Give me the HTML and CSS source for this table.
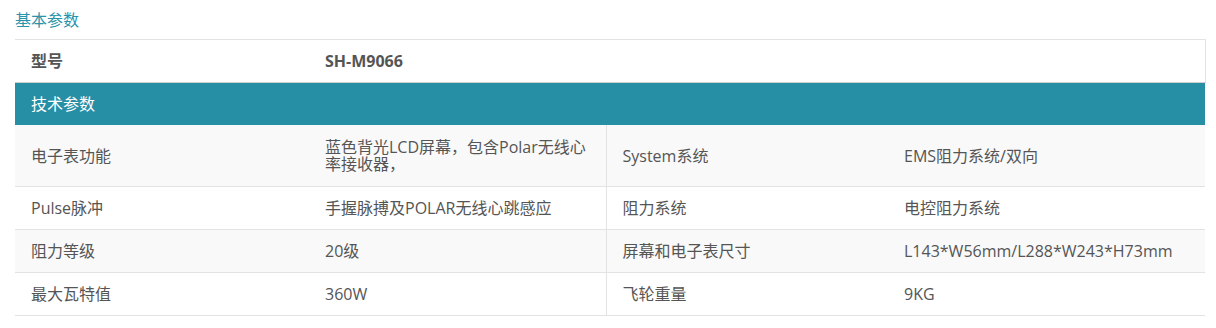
FILE: index.html
```html
<!DOCTYPE html>
<html lang="zh-CN">
<head>
<meta charset="utf-8">
<title>基本参数</title>
<link rel="stylesheet" href="styles.css">
</head>
<body>
<div class="page">
  <div class="section-title">基本参数</div>
  <table class="spec">
    <colgroup>
      <col class="c1"><col class="c2"><col class="c3"><col class="c4">
    </colgroup>
    <tr class="model">
      <th>型号</th>
      <td colspan="3">SH-M9066</td>
    </tr>
    <tr class="group">
      <th colspan="4">技术参数</th>
    </tr>
    <tr class="odd tall">
      <td>电子表功能</td>
      <td>蓝色背光LCD屏幕，包含Polar无线心率接收器，</td>
      <td class="sep">System系统</td>
      <td>EMS阻力系统/双向</td>
    </tr>
    <tr>
      <td>Pulse脉冲</td>
      <td>手握脉搏及POLAR无线心跳感应</td>
      <td class="sep">阻力系统</td>
      <td>电控阻力系统</td>
    </tr>
    <tr class="odd">
      <td>阻力等级</td>
      <td>20级</td>
      <td class="sep">屏幕和电子表尺寸</td>
      <td>L143*W56mm/L288*W243*H73mm</td>
    </tr>
    <tr>
      <td>最大瓦特值</td>
      <td>360W</td>
      <td class="sep">飞轮重量</td>
      <td>9KG</td>
    </tr>
  </table>
</div>
</body>
</html>
```

FILE: styles.css
```css
html, body {
  margin: 0;
  padding: 0;
  background: #ffffff;
}

body {
  font-family: "Open Sans", "Noto Sans CJK SC", sans-serif;
  font-size: 16px;
  color: #555555;
}

.page {
  padding: 0 12px 0 15px;
}

.section-title {
  color: #2a93aa;
  line-height: 17px;
  padding: 12px 0 10px;
}

.spec {
  width: 1190px;
  border-collapse: collapse;
  table-layout: fixed;
}

.spec .c1 { width: 294px; }
.spec .c2 { width: 297px; }
.spec .c3 { width: 282px; }
.spec .c4 { width: 317px; }

.spec th,
.spec td {
  text-align: left;
  vertical-align: middle;
  line-height: 17px;
  padding: 13px 16px 12px;
  border-bottom: 1px solid #e3e3e3;
  font-weight: normal;
}

.spec tr.model th,
.spec tr.model td {
  font-weight: bold;
  padding: 13px 16px 12px;
  border-top: 1px solid #e3e3e3;
  border-bottom: 1px solid #cfcfcf;
  background: #ffffff;
}

.spec tr.model td {
  border-right: 1px solid #e3e3e3;
}

.spec tr.group th {
  background: #268fa6;
  color: #ffffff;
  padding: 13px 16px 12px;
  border-bottom: none;
}

.spec tr.tall td {
  padding: 14px 16px 13px;
}

.spec tr.odd td {
  background: #f9f9f9;
}

.spec td.sep {
  border-left: 1px solid #e3e3e3;
}
```
